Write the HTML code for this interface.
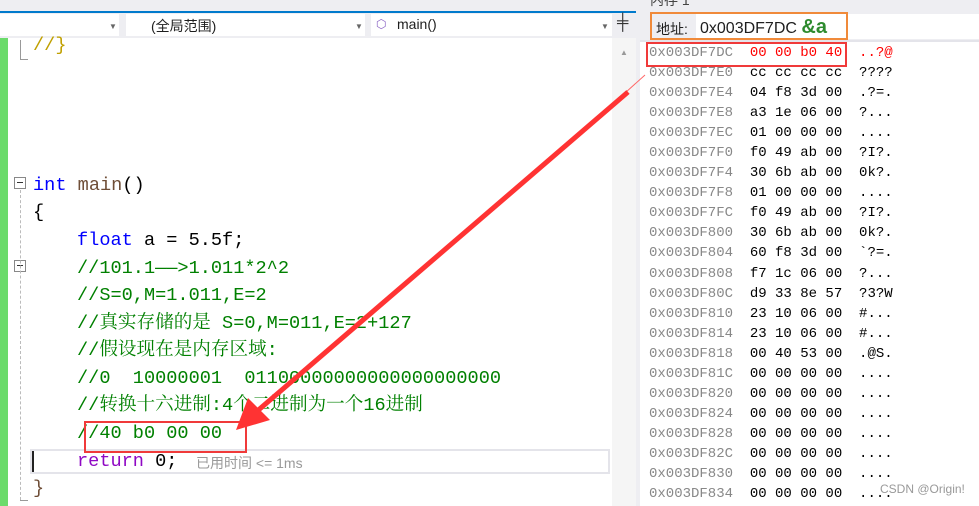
<!DOCTYPE html><html><head><meta charset="utf-8"><style>
*{margin:0;padding:0;box-sizing:border-box}
body{width:979px;height:506px;overflow:hidden;background:#fff;position:relative;font-family:"Liberation Sans","Noto Sans CJK SC",sans-serif}
.abs{position:absolute}
.code{font-family:"Liberation Mono","Noto Serif CJK SC",monospace;font-size:18.6px;white-space:pre;line-height:20px}
.g{color:#008000}.b{color:#0000ff}.br{color:#6f4e37}
.mem{font-family:"Liberation Mono","Noto Serif CJK SC",monospace;font-size:14px;position:absolute;left:649px;line-height:20.05px}
.mem div{white-space:pre;height:20.05px}
.mem .a{color:#888}
</style></head><body>
<div class="abs" style="left:0;top:0;width:640px;height:12px;background:#eeeef2"></div>
<div class="abs" style="left:0;top:11px;width:636px;height:2px;background:#007acc"></div>
<div class="abs" style="left:0;top:13px;width:636px;height:25px;background:#eeeef2"></div>
<div class="abs" style="left:0;top:14px;width:119px;height:22px;background:#fff"></div>
<div class="abs" style="left:126px;top:14px;width:239px;height:22px;background:#fff"></div>
<div class="abs" style="left:371px;top:14px;width:241px;height:22px;background:#fff"></div>
<div class="abs" style="left:109px;top:22px;color:#666;font-size:8px">▼</div>
<div class="abs" style="left:355px;top:22px;color:#666;font-size:8px">▼</div>
<div class="abs" style="left:601px;top:22px;color:#666;font-size:8px">▼</div>
<div class="abs" style="left:151px;top:16px;font-size:14px;color:#1e1e1e">(全局范围)</div>
<div class="abs" style="left:376px;top:17px;font-size:12px;color:#8a63c4">⬡</div>
<div class="abs" style="left:397px;top:16px;font-size:14px;color:#1e1e1e">main()</div>
<div class="abs" style="left:617px;top:14px;font-size:16px;color:#333">╪</div>
<div class="abs" style="left:612px;top:38px;width:24px;height:468px;background:#f5f5f5"></div>
<div class="abs" style="left:620px;top:48px;font-size:8px;color:#999">▲</div>
<div class="abs" style="left:0;top:38px;width:8px;height:468px;background:#6bdb6b"></div>
<div class="abs" style="left:20px;top:40px;width:1px;height:20px;background:#999"></div>
<div class="abs" style="left:20px;top:59px;width:8px;height:1px;background:#999"></div>
<div class="abs" style="left:14px;top:177px;width:12px;height:12px;border:1px solid #888;background:#fff"></div>
<div class="abs" style="left:17px;top:182px;width:6px;height:1px;background:#333"></div>
<div class="abs" style="left:14px;top:260px;width:12px;height:12px;border:1px solid #888;background:#fff"></div>
<div class="abs" style="left:17px;top:265px;width:6px;height:1px;background:#333"></div>
<div class="abs" style="left:20px;top:190px;width:1px;height:310px;border-left:1px dashed #bbb"></div>
<div class="abs" style="left:20px;top:500px;width:8px;height:1px;background:#999"></div>
<div class="abs" style="left:30px;top:449px;width:580px;height:25px;border:2px solid #e4e4ea"></div>
<div class="abs" style="left:32px;top:451px;width:2px;height:21px;background:#222"></div>
<div class="code abs" style="left:33px;top:36px"><span style="color:#c0a000">//}</span></div>
<div class="code abs" style="left:33px;top:176px"><span class="b">int</span> <span class="br">main</span>()</div>
<div class="code abs" style="left:33px;top:203px">{</div>
<div class="code abs" style="left:77px;top:231px"><span class="b">float</span> a = 5.5f;</div>
<div class="code abs g" style="left:77px;top:259px">//101.1——&gt;1.011*2^2</div>
<div class="code abs g" style="left:77px;top:286px">//S=0,M=1.011,E=2</div>
<div class="code abs g" style="left:77px;top:314px">//真实存储的是 S=0,M=011,E=2+127</div>
<div class="code abs g" style="left:77px;top:341px">//假设现在是内存区域:</div>
<div class="code abs g" style="left:77px;top:369px">//0  10000001  01100000000000000000000</div>
<div class="code abs g" style="left:77px;top:396px">//转换十六进制:4个二进制为一个16进制</div>
<div class="code abs g" style="left:77px;top:424px">//40 b0 00 00</div>
<div class="code abs" style="left:77px;top:452px"><span style="color:#8f08c4">return</span> 0;</div>
<div class="abs" style="left:196px;top:453px;font-size:14px;color:#999">已用时间 &lt;= 1ms</div>
<div class="code abs" style="left:33px;top:479px;color:#6f4e37">}</div>
<div class="abs" style="left:84px;top:421px;width:163px;height:32px;border:2px solid #f03a3a"></div>
<div class="abs" style="left:636px;top:0;width:4px;height:506px;background:#eeeef2"></div>
<div class="abs" style="left:640px;top:0;width:339px;height:40px;background:#eeeef2"></div>
<div class="abs" style="left:650px;top:-10px;font-size:14px;color:#444">内存 1</div>
<div class="abs" style="left:696px;top:14px;width:283px;height:25px;background:#fff"></div>
<div class="abs" style="left:656px;top:19px;font-size:14px;color:#1e1e1e">地址:</div>
<div class="abs" style="left:700px;top:16px;font-size:16px;color:#1e1e1e">0x003DF7DC <span style="color:#2e8b2e;font-size:20px;font-weight:bold">&amp;a</span></div>
<div class="abs" style="left:650px;top:12px;width:198px;height:28px;border:2px solid #f08a3a"></div>
<div class="abs" style="left:640px;top:40px;width:339px;height:2px;background:#e4e4ea"></div>
<div class="mem" style="top:43px"><div style="color:#f00"><span class="a">0x003DF7DC</span>  00 00 b0 40  ..?@</div><div><span class="a">0x003DF7E0</span>  cc cc cc cc  ????</div><div><span class="a">0x003DF7E4</span>  04 f8 3d 00  .?=.</div><div><span class="a">0x003DF7E8</span>  a3 1e 06 00  ?...</div><div><span class="a">0x003DF7EC</span>  01 00 00 00  ....</div><div><span class="a">0x003DF7F0</span>  f0 49 ab 00  ?I?.</div><div><span class="a">0x003DF7F4</span>  30 6b ab 00  0k?.</div><div><span class="a">0x003DF7F8</span>  01 00 00 00  ....</div><div><span class="a">0x003DF7FC</span>  f0 49 ab 00  ?I?.</div><div><span class="a">0x003DF800</span>  30 6b ab 00  0k?.</div><div><span class="a">0x003DF804</span>  60 f8 3d 00  `?=.</div><div><span class="a">0x003DF808</span>  f7 1c 06 00  ?...</div><div><span class="a">0x003DF80C</span>  d9 33 8e 57  ?3?W</div><div><span class="a">0x003DF810</span>  23 10 06 00  #...</div><div><span class="a">0x003DF814</span>  23 10 06 00  #...</div><div><span class="a">0x003DF818</span>  00 40 53 00  .@S.</div><div><span class="a">0x003DF81C</span>  00 00 00 00  ....</div><div><span class="a">0x003DF820</span>  00 00 00 00  ....</div><div><span class="a">0x003DF824</span>  00 00 00 00  ....</div><div><span class="a">0x003DF828</span>  00 00 00 00  ....</div><div><span class="a">0x003DF82C</span>  00 00 00 00  ....</div><div><span class="a">0x003DF830</span>  00 00 00 00  ....</div><div><span class="a">0x003DF834</span>  00 00 00 00  ....</div></div>
<div class="abs" style="left:646px;top:42px;width:201px;height:25px;border:2px solid #f03a3a"></div>
<div class="abs" style="left:880px;top:482px;font-size:12px;color:#999">CSDN @Origin!</div>
<svg class="abs" style="left:0;top:0" width="979" height="506">
<line x1="645" y1="75" x2="615" y2="102" stroke="#f66" stroke-width="1"/>
<line x1="628" y1="92" x2="255" y2="413" stroke="#f33" stroke-width="5"/>
<polygon points="236,430 248,398 270,420" fill="#f33"/>
</svg>
</body></html>
